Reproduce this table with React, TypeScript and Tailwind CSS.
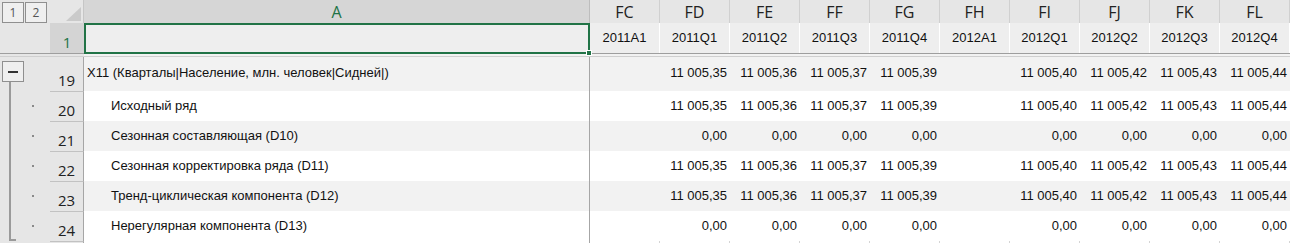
import React from 'react';

const cols = ['FC', 'FD', 'FE', 'FF', 'FG', 'FH', 'FI', 'FJ', 'FK', 'FL'];
const periods = ['2011A1', '2011Q1', '2011Q2', '2011Q3', '2011Q4', '2012A1', '2012Q1', '2012Q2', '2012Q3', '2012Q4'];
const series = ['', '11 005,35', '11 005,36', '11 005,37', '11 005,39', '', '11 005,40', '11 005,42', '11 005,43', '11 005,44'];
const zeros = ['', '0,00', '0,00', '0,00', '0,00', '', '0,00', '0,00', '0,00', '0,00'];

const rows = [
  { num: 19, label: 'X11 (Кварталы|Население, млн. человек|Сидней|)', values: series, shaded: true, top: true },
  { num: 20, label: 'Исходный ряд', values: series, shaded: false },
  { num: 21, label: 'Сезонная составляющая (D10)', values: zeros, shaded: true },
  { num: 22, label: 'Сезонная корректировка ряда (D11)', values: series, shaded: false },
  { num: 23, label: 'Тренд-циклическая компонента (D12)', values: series, shaded: true },
  { num: 24, label: 'Нерегулярная компонента (D13)', values: zeros, shaded: false, last: true },
];

const cell = "font-['Liberation_Sans',Arial,sans-serif] text-[13px] text-[#111]";
const ui = "font-['Open_Sans','Noto_Sans',sans-serif]";

const Gutter = ({ row }: { row: (typeof rows)[number] }) => {
  if (row.top) {
    return (
      <div className="w-[50px] shrink-0 flex flex-col bg-[#e6e6e6] pt-[4px]">
        <div className={`${ui} ml-[2px] w-[22px] h-[21px] shrink-0 border border-[#8f8f8f] bg-[#efefef] flex items-center justify-center`}>
          <div className="w-[10px] h-[2px] bg-[#333]" />
        </div>
        <div className="ml-[9px] w-[2px] flex-1 bg-[#9a9a9a]" />
      </div>
    );
  }
  return (
    <div className="w-[50px] shrink-0 flex items-center bg-[#e6e6e6]">
      {row.last ? (
        <div className="ml-[9px] w-[7px] self-stretch border-l-2 border-b-2 border-[#9a9a9a] mb-[0px]" />
      ) : (
        <div className="ml-[9px] w-[2px] self-stretch bg-[#9a9a9a]" />
      )}
      <div className={`${row.last ? 'ml-[16px]' : 'ml-[21px]'} w-[2px] h-[2px] bg-[#8a8a8a]`} />
    </div>
  );
};

export default function App() {
  return (
    <div className="w-[1290px] h-[243px] overflow-hidden bg-white flex flex-col">
      {/* column letters */}
      <div className="h-[23px] flex bg-[#e6e6e6]">
        <div className="w-[50px] shrink-0 flex gap-[1px] pl-[2px] pt-[2px]">
          {['1', '2'].map(n => (
            <div key={n} className={`${ui} w-[22px] h-[21px] border border-[#8f8f8f] bg-[#efefef] flex items-center justify-center text-[12px] text-[#555]`}>
              {n}
            </div>
          ))}
        </div>
        <div className="w-[34px] shrink-0 border-r border-[#c6c6c6] flex items-end justify-end pr-[2px] pb-[2px]">
          <svg width="15" height="14" viewBox="0 0 15 14">
            <polygon points="15,0 15,14 0,14" fill="#cacaca" />
          </svg>
        </div>
        <div className={`${ui} w-[506px] shrink-0 bg-[#d6d6d6] border-r border-[#bdbdbd] flex items-center justify-center text-[16px] text-[#217346]`}>
          A
        </div>
        {cols.map(c => (
          <div key={c} className={`${ui} w-[70px] shrink-0 border-r border-[#d0d0d0] flex items-center justify-center text-[16px] text-[#222]`}>
            {c}
          </div>
        ))}
      </div>

      {/* row 1 */}
      <div className="h-[31px] flex border-b border-[#9e9e9e] bg-[#eeeeee]">
        <div className="w-[50px] shrink-0 bg-[#e6e6e6]" />
        <div className={`${ui} w-[34px] shrink-0 bg-[#d4d4d4] flex items-end justify-center pb-[3px] text-[15px] leading-none text-[#217346]`}>
          1
        </div>
        <div className="relative w-[506px] shrink-0 border-2 border-[#217346] -mb-[1px]">
          <div className="absolute -right-[4px] -bottom-[4px] w-[6px] h-[6px] bg-[#217346] border border-white" />
        </div>
        {periods.map(p => (
          <div key={p} className={`${cell} w-[70px] shrink-0 border-r border-white flex items-center justify-center`}>
            {p}
          </div>
        ))}
      </div>

      {/* frozen pane split */}
      <div className="h-[3px] flex border-b border-[#cfcfcf]">
        <div className="w-[84px] shrink-0 bg-[#e6e6e6]" />
        <div className="flex-1 bg-[#f2f2f2]" />
      </div>

      {rows.map(row => (
        <div key={row.num} className={`${row.top ? 'h-[34px]' : 'h-[30px]'} flex ${row.shaded ? 'bg-[#f2f2f2]' : 'bg-white'}`}>
          <Gutter row={row} />
          <div className={`${ui} w-[34px] shrink-0 bg-[#e6e6e6] border-r border-[#a6a6a6] ${row.top ? '' : 'border-t border-t-[#c2c2c2]'} flex items-end justify-center pb-[3px] text-[15px] leading-none text-[#222]`}>
            {row.num}
          </div>
          <div className={`${cell} w-[506px] shrink-0 border-r border-[#a6a6a6] flex items-center ${row.top ? 'pl-[3px] pb-[2px]' : 'pl-[27px]'} whitespace-nowrap`}>
            {row.label}
          </div>
          {row.values.map((v, i) => (
            <div key={i} className={`${cell} w-[70px] shrink-0 flex items-center justify-end pr-[3px] ${row.top ? 'pb-[2px]' : ''}`}>
              {v}
            </div>
          ))}
        </div>
      ))}

      {/* next row stub */}
      <div className="h-[2px] flex bg-white">
        <div className="w-[50px] shrink-0 bg-[#e6e6e6]" />
        <div className="w-[34px] shrink-0 bg-[#e6e6e6] border-r border-[#a6a6a6] border-t border-t-[#c2c2c2]" />
        <div className="w-[506px] shrink-0 border-r border-[#a6a6a6]" />
        {cols.map(c => (
          <div key={c} className="w-[70px] shrink-0 border-r border-[#d4d4d4]" />
        ))}
      </div>
    </div>
  );
}
